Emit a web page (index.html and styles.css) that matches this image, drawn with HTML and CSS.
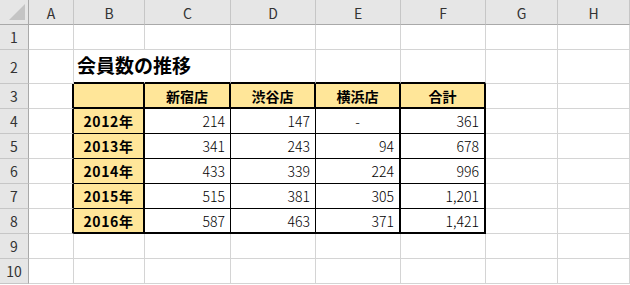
FILE: index.html
```html
<!DOCTYPE html>
<html lang="ja">
<head>
<meta charset="utf-8">
<link rel="stylesheet" href="styles.css">
</head>
<body>
<div class="sheet">
  <div class="corner"><span class="tri"></span></div>
  <div class="ch">A</div><div class="ch">B</div><div class="ch">C</div><div class="ch">D</div><div class="ch">E</div><div class="ch">F</div><div class="ch">G</div><div class="ch last">H</div>

  <div class="rh">1</div>
  <div class="c"></div><div class="c"></div><div class="c"></div><div class="c"></div><div class="c"></div><div class="c"></div><div class="c"></div><div class="c"></div>

  <div class="rh tall">2</div>
  <div class="c"></div>
  <div class="c title tb">会員数の推移</div>
  <div class="c tb"></div><div class="c tb"></div><div class="c tb"></div><div class="c tb"></div>
  <div class="c"></div><div class="c"></div>

  <div class="rh">3</div>
  <div class="c lb"></div>
  <div class="c hd"></div><div class="c hd">新宿店</div><div class="c hd">渋谷店</div><div class="c hd">横浜店</div><div class="c hd">合計</div>
  <div class="c"></div><div class="c"></div>

  <div class="rh">4</div>
  <div class="c lb"></div>
  <div class="c yr">2012年</div><div class="c n">214</div><div class="c n">147</div><div class="c n thick dash">-</div><div class="c n thick">361</div>
  <div class="c"></div><div class="c"></div>

  <div class="rh">5</div>
  <div class="c lb"></div>
  <div class="c yr">2013年</div><div class="c n">341</div><div class="c n">243</div><div class="c n thick">94</div><div class="c n thick">678</div>
  <div class="c"></div><div class="c"></div>

  <div class="rh">6</div>
  <div class="c lb"></div>
  <div class="c yr">2014年</div><div class="c n">433</div><div class="c n">339</div><div class="c n thick">224</div><div class="c n thick">996</div>
  <div class="c"></div><div class="c"></div>

  <div class="rh">7</div>
  <div class="c lb"></div>
  <div class="c yr">2015年</div><div class="c n">515</div><div class="c n">381</div><div class="c n thick">305</div><div class="c n thick">1,201</div>
  <div class="c"></div><div class="c"></div>

  <div class="rh">8</div>
  <div class="c lb"></div>
  <div class="c yr end">2016年</div><div class="c n end">587</div><div class="c n end">463</div><div class="c n thick end">371</div><div class="c n thick end">1,421</div>
  <div class="c"></div><div class="c"></div>

  <div class="rh">9</div>
  <div class="c"></div><div class="c"></div><div class="c"></div><div class="c"></div><div class="c"></div><div class="c"></div><div class="c"></div><div class="c"></div>

  <div class="rh">10</div>
  <div class="c"></div><div class="c"></div><div class="c"></div><div class="c"></div><div class="c"></div><div class="c"></div><div class="c"></div><div class="c"></div>
</div>
</body>
</html>
```
FILE: styles.css
```css
html, body {
  margin: 0;
  padding: 0;
  background: #ffffff;
}

body {
  width: 630px;
  height: 285px;
  overflow: hidden;
  font-family: "Noto Sans CJK JP", "Noto Sans", sans-serif;
  color: #000;
}

.sheet {
  display: grid;
  grid-template-columns: 29px 45px 71px 86px 85px 85px 85px 72px 72px;
  grid-template-rows: 25px 25px 34px repeat(8, 25px);
  background: #ffffff;
}

.sheet > div {
  box-sizing: border-box;
  min-width: 0;
}

.corner {
  background: #e6e6e6;
  border-right: 1px solid #a9a9a9;
  border-bottom: 1px solid #a9a9a9;
  position: relative;
}

.tri {
  position: absolute;
  right: 3px;
  bottom: 4px;
  width: 0;
  height: 0;
  border-style: solid;
  border-width: 0 0 16px 16px;
  border-color: transparent transparent #c4c4c4 transparent;
}

.ch {
  background: #e6e6e6;
  border-right: 1px solid #c6c6c6;
  border-bottom: 1px solid #a9a9a9;
  display: flex;
  align-items: center;
  justify-content: center;
  font-size: 14px;
  color: #333;
  padding-top: 1px;
}

.rh {
  background: #e6e6e6;
  border-right: 1px solid #a9a9a9;
  border-bottom: 1px solid #c6c6c6;
  display: flex;
  align-items: center;
  justify-content: center;
  font-size: 14px;
  color: #333;
}

.c {
  border-right: 1px solid #d4d4d4;
  border-bottom: 1px solid #d4d4d4;
  display: flex;
  align-items: center;
  font-size: 14px;
  font-weight: 300;
  white-space: nowrap;
  overflow: visible;
  padding: 0 5px;
}

.title {
  font-size: 19px;
  font-weight: bold;
  padding-left: 3px;
  padding-bottom: 4px;
  border-right-color: transparent;
}

.tb {
  border-bottom: 2px solid #000;
}

.lb {
  border-right: 2px solid #000;
}

.hd {
  background: #ffe699;
  font-weight: bold;
  justify-content: center;
  border-right: 2px solid #000;
  border-bottom: 2px solid #000;
}

.yr {
  background: #ffe699;
  font-weight: bold;
  letter-spacing: 0.6px;
  justify-content: center;
  border-right: 2px solid #000;
  border-bottom: 1px solid #000;
}

.n {
  justify-content: flex-end;
  border-right: 1px solid #000;
  border-bottom: 1px solid #000;
}

.n.thick {
  border-right: 2px solid #000;
}

.dash {
  justify-content: center;
}

.end {
  border-bottom: 2px solid #000;
}
```
